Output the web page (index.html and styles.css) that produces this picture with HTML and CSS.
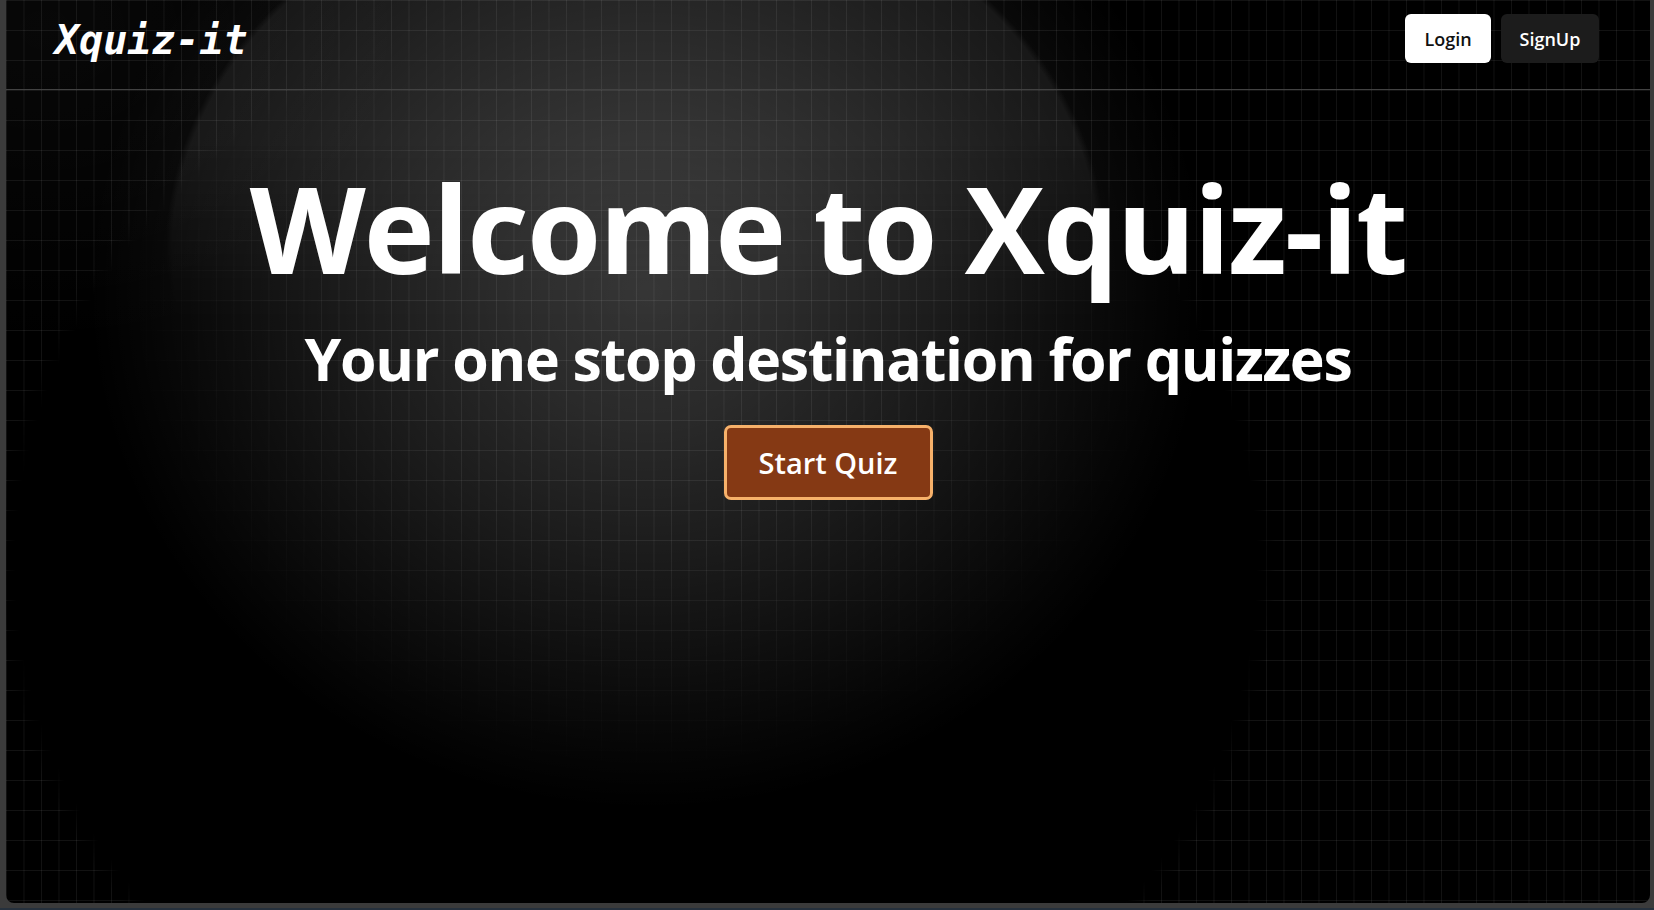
FILE: index.html
```html
<!DOCTYPE html>
<html lang="en">
<head>
<meta charset="utf-8">
<title>Xquiz-it</title>
<link rel="stylesheet" href="styles.css">
</head>
<body>
<div class="window">
  <div class="bg-corner"></div>
  <div class="bg-cap"></div>
  <div class="bg-spot"></div>
  <div class="bg-grid"></div>
  <header class="topbar">
    <div class="logo">Xquiz-it</div>
    <nav class="auth">
      <button class="btn btn-login">Login</button>
      <button class="btn btn-signup">SignUp</button>
    </nav>
  </header>
  <main class="hero">
    <h1 class="hero-title">Welcome to Xquiz-it</h1>
    <h2 class="hero-sub">Your one stop destination for quizzes</h2>
    <button class="btn-start">Start Quiz</button>
  </main>
</div>
</body>
</html>
```

FILE: styles.css
```css
* { box-sizing: border-box; }

html, body {
  margin: 0;
  height: 100%;
}

body {
  background: linear-gradient(to top, #26313d 0, #26313d 2px, #3b3b3b 2px);
  padding: 0 4px 7px 6px;
  font-family: "Open Sans", "Noto Sans", sans-serif;
  overflow: hidden;
}

.window {
  position: relative;
  height: 903px;
  background: #000;
  border-radius: 0 0 8px 8px;
  overflow: hidden;
}

.bg-corner {
  position: absolute;
  inset: 0;
  background: radial-gradient(ellipse 420px 320px at 40px 30px,
    rgba(255,255,255,0.03) 0%, rgba(255,255,255,0) 100%);
  pointer-events: none;
}

.bg-cap {
  position: absolute;
  inset: 0;
  background: radial-gradient(ellipse 470px 380px at 629px 250px,
    rgba(255,255,255,0.06) 0%, rgba(255,255,255,0.06) 98.5%, rgba(255,255,255,0) 100%);
  -webkit-mask-image: linear-gradient(to bottom, #000 0, #000 140px, transparent 320px);
  mask-image: linear-gradient(to bottom, #000 0, #000 140px, transparent 320px);
  pointer-events: none;
}

.bg-spot {
  position: absolute;
  inset: 0;
  background: radial-gradient(ellipse 560px 520px at 642px 290px,
    rgba(255,255,255,0.205) 0%,
    rgba(255,255,255,0.165) 25%,
    rgba(255,255,255,0.11) 50%,
    rgba(255,255,255,0.06) 72%,
    rgba(255,255,255,0.024) 88%,
    rgba(255,255,255,0) 100%);
  pointer-events: none;
}

.bg-grid {
  position: absolute;
  inset: 0;
  background-image:
    linear-gradient(to right, rgba(255,255,255,0.07) 1px, transparent 1px),
    linear-gradient(to bottom, rgba(255,255,255,0.07) 1px, transparent 1px);
  background-size: 17.5px 30px;
  -webkit-mask-image:
    radial-gradient(ellipse 560px 520px at 642px 290px, #000 45%, transparent 95%),
    radial-gradient(ellipse 640px 564px at 630px 566px, transparent 97%, #000 100%);
  mask-image:
    radial-gradient(ellipse 560px 520px at 642px 290px, #000 45%, transparent 95%),
    radial-gradient(ellipse 640px 564px at 630px 566px, transparent 97%, #000 100%);
  pointer-events: none;
}

.topbar {
  position: relative;
  height: 90px;
  border-bottom: 1px solid #424242;
  display: flex;
  align-items: center;
  justify-content: space-between;
  padding: 0 51px 0 49px;
}

.logo {
  font-family: "DejaVu Sans Mono", "Liberation Mono", monospace;
  font-weight: 700;
  font-style: italic;
  font-size: 40px;
  color: #fff;
  margin-top: -10px;
}

.auth {
  display: flex;
  gap: 10px;
  margin-top: -12px;
}

.btn {
  font-family: "Open Sans", "Noto Sans", sans-serif;
  font-weight: 600;
  font-size: 18px;
  height: 49px;
  padding: 0 16px;
  border: none;
  border-radius: 6px;
  cursor: pointer;
}

.btn-login {
  background: #fff;
  color: #111;
  width: 86px;
}

.btn-signup {
  background: #1c1c1c;
  color: #fff;
  width: 98px;
}

.hero {
  position: relative;
  display: flex;
  flex-direction: column;
  align-items: center;
  padding-top: 66px;
}

.hero-title {
  margin: 0;
  color: #fff;
  font-weight: 700;
  font-size: 120px;
  line-height: 144px;
  letter-spacing: -2px;
}

.hero-sub {
  margin: 18px 0 0;
  color: #fff;
  font-weight: 700;
  font-size: 59px;
  line-height: 80px;
  letter-spacing: -1.3px;
}

.btn-start {
  margin-top: 27px;
  width: 209px;
  height: 75px;
  background: #853914;
  border: 3px solid #f7b16a;
  border-radius: 7px;
  color: #fff;
  font-family: "Open Sans", "Noto Sans", sans-serif;
  font-weight: 600;
  font-size: 29px;
  cursor: pointer;
}
```
